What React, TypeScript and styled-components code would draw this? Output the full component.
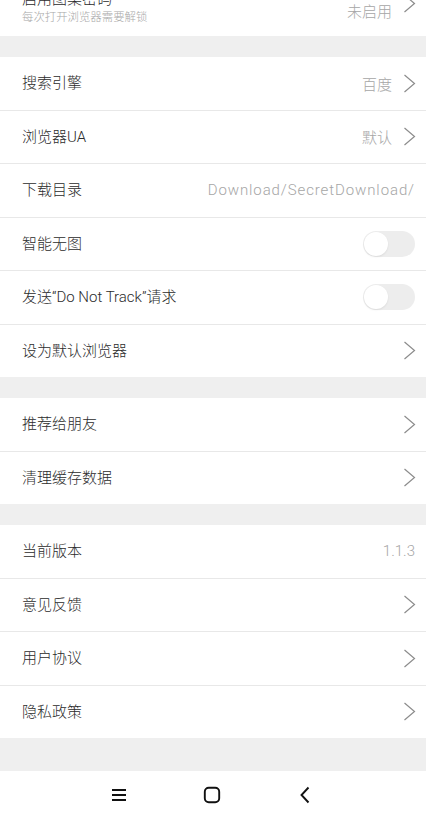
import React from "react";
import styled, { createGlobalStyle } from "styled-components";

const GlobalStyle = createGlobalStyle`
  html, body {
    margin: 0;
    padding: 0;
    background: #efefef;
  }
  body {
    font-family: "Roboto", "Noto Sans CJK SC", sans-serif;
  }
`;

type Item = {
  label: string;
  value?: string;
  wide?: boolean;
  arrow?: boolean;
  toggle?: boolean;
};

const groups: Item[][] = [
  [
    { label: "搜索引擎", value: "百度", arrow: true },
    { label: "浏览器UA", value: "默认", arrow: true },
    { label: "下载目录", value: "Download/SecretDownload/", wide: true },
    { label: "智能无图", toggle: true },
    { label: "发送“Do Not Track”请求", toggle: true },
    { label: "设为默认浏览器", arrow: true },
  ],
  [
    { label: "推荐给朋友", arrow: true },
    { label: "清理缓存数据", arrow: true },
  ],
  [
    { label: "当前版本", value: "1.1.3" },
    { label: "意见反馈", arrow: true },
    { label: "用户协议", arrow: true },
    { label: "隐私政策", arrow: true },
  ],
];

const Chevron = ({ raised }: { raised?: boolean }) => (
  <ArrowIcon $raised={raised} width="13" height="19" viewBox="0 0 13 19">
    <polyline points="1.5,1 11.5,9.5 1.5,18" fill="none" stroke="#8c8c8c" strokeWidth="1.2" />
  </ArrowIcon>
);

const App: React.FC = () => {
  return (
    <Screen>
      <GlobalStyle />
      <Scroll>
        <List>
          <Group>
            <Row $tall>
              <TitleBlock>
                <Label>启用图案密码</Label>
                <SubLabel>每次打开浏览器需要解锁</SubLabel>
              </TitleBlock>
              <Value>未启用</Value>
              <Chevron raised />
            </Row>
          </Group>
          {groups.map((group, gi) => (
            <Group key={gi}>
              {group.map((item) => (
                <Row key={item.label}>
                  <Label>{item.label}</Label>
                  {item.value && <Value $wide={item.wide}>{item.value}</Value>}
                  {item.arrow && <Chevron />}
                  {item.toggle && (
                    <Switch>
                      <Knob />
                    </Switch>
                  )}
                </Row>
              ))}
            </Group>
          ))}
        </List>
      </Scroll>
      <NavBar>
        <NavButton>
          <svg width="16" height="16" viewBox="0 0 16 16">
            <path d="M1 3h14M1 8h14M1 13h14" stroke="#111" strokeWidth="1.8" fill="none" />
          </svg>
        </NavButton>
        <NavButton>
          <svg width="18" height="18" viewBox="0 0 18 18">
            <rect x="1.8" y="1.8" width="14.4" height="14.4" rx="4" stroke="#111" strokeWidth="1.9" fill="none" />
          </svg>
        </NavButton>
        <NavButton>
          <svg width="12" height="18" viewBox="0 0 12 18">
            <polyline points="9.5,1.5 2.5,9 9.5,16.5" stroke="#111" strokeWidth="1.9" fill="none" />
          </svg>
        </NavButton>
      </NavBar>
    </Screen>
  );
};

export default App;

const Screen = styled.div`
  width: 100%;
  height: 819px;
  display: flex;
  flex-direction: column;
  overflow: hidden;
`;

const Scroll = styled.div`
  flex: 1;
  overflow: hidden;
  background: #efefef;
`;

const List = styled.div`
  margin-top: -16px;
  display: flex;
  flex-direction: column;
  gap: 21px;
`;

const Group = styled.div`
  background: #fff;
`;

const Row = styled.div<{ $tall?: boolean }>`
  height: ${(p) => (p.$tall ? "52px" : "52.5px")};
  display: flex;
  align-items: center;
  padding: 0 10px 0 22px;

  & + & {
    border-top: 1px solid #e8e8e8;
  }
`;

const TitleBlock = styled.div`
  display: flex;
  flex-direction: column;
  gap: 2px;
  margin-top: -6px;
`;

const Label = styled.span`
  flex: 1;
  font-size: 15px;
  line-height: 18px;
  font-weight: 300;
  color: #2b2b2b;
  white-space: nowrap;
`;

const SubLabel = styled.span`
  font-size: 11.4px;
  line-height: 14px;
  font-weight: 300;
  color: #a8a8a8;
`;

const Value = styled.span<{ $wide?: boolean }>`
  margin-left: auto;
  font-size: 15px;
  color: #a6a6a6;
  font-weight: 300;
  white-space: nowrap;
  letter-spacing: ${(p) => (p.$wide ? "0.9px" : "0")};
  padding-right: 1px;
`;

const ArrowIcon = styled.svg<{ $raised?: boolean }>`
  margin-left: 10px;
  flex-shrink: 0;
  margin-top: ${(p) => (p.$raised ? "-14px" : "0")};
`;

const Switch = styled.div`
  width: 52px;
  height: 26px;
  border-radius: 13px;
  background: #ededed;
  margin-left: auto;
  margin-right: 1px;
  position: relative;
`;

const Knob = styled.div`
  position: absolute;
  left: 1px;
  top: 1px;
  width: 24px;
  height: 24px;
  border-radius: 50%;
  background: #fff;
  box-shadow: 0 1px 2px rgba(0, 0, 0, 0.08);
`;

const NavBar = styled.div`
  height: 48px;
  background: #fff;
  display: flex;
  align-items: center;
  justify-content: center;
  gap: 69px;
  padding-right: 2px;
`;

const NavButton = styled.div`
  width: 24px;
  height: 24px;
  display: flex;
  align-items: center;
  justify-content: center;
`;
